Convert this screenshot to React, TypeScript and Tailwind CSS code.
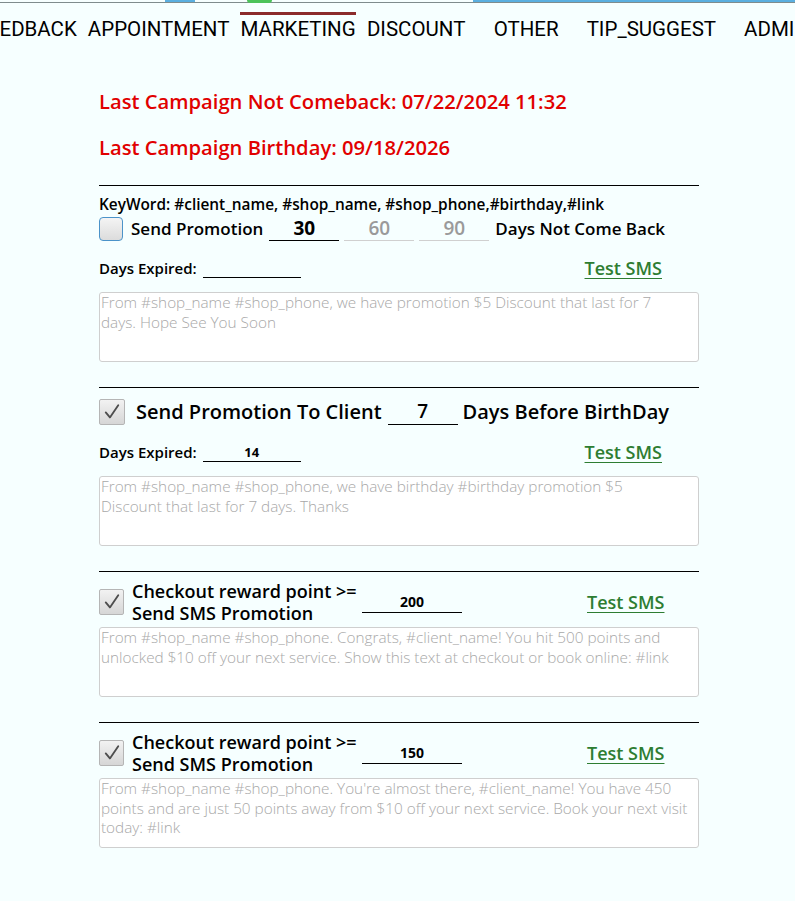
import React from 'react';

const tabs = ['FEEDBACK', 'APPOINTMENT', 'MARKETING', 'DISCOUNT', 'OTHER', 'TIP_SUGGEST', 'ADMIN'];

const CheckBox = ({ checked, small }: { checked?: boolean; small?: boolean }) => {
  if (!checked) {
    return (
      <span className="block w-[24px] h-[24px] shrink-0 rounded-[4px] border-[1.5px] border-[#4b93c9] bg-gradient-to-b from-[#f4f4f4] to-[#dcdcdc]" />
    );
  }
  return (
    <span
      className={
        'flex items-center justify-center shrink-0 rounded-[2px] border border-[#b5b5b5] bg-gradient-to-b from-[#f2f2f2] to-[#d6d6d6] ' +
        (small ? 'w-[25px] h-[26px]' : 'w-[26px] h-[26px]')
      }
    >
      <svg viewBox="0 0 24 24" className="w-[20px] h-[20px]" fill="none">
        <path d="M4.5 12.5 L9.5 18.5 L19.5 4" stroke="#4d4d4d" strokeWidth="2.2" strokeLinecap="round" strokeLinejoin="round" />
      </svg>
    </span>
  );
};

const Underline = ({ value, width, muted, bold, size }: { value?: string; width: string; muted?: boolean; bold?: boolean; size?: string }) => (
  <div
    className={
      'flex items-center justify-center shrink-0 border-b ' +
      width +
      ' ' +
      (muted ? 'border-[#d0d0d0] text-[#9a9a9a]' : 'border-black text-black') +
      ' ' +
      (bold ? 'font-bold' : 'font-semibold') +
      ' ' +
      (size || 'text-[19px]')
    }
  >
    {value}
  </div>
);

const TestSms = ({ className }: { className?: string }) => (
  <span className={'text-[18px] leading-[22px] font-semibold text-[#2e7d32] underline underline-offset-[3px] decoration-[1px] ' + (className || '')}>
    Test SMS
  </span>
);

const Message = ({ text }: { text: string }) => (
  <textarea
    readOnly
    placeholder={text}
    className="block w-full h-[70px] resize-none rounded-[3px] border border-[#cfcfcf] bg-white px-[1px] pt-0 text-[15.3px] leading-[19.5px] font-light placeholder:text-[#a8a8a8] outline-none overflow-hidden"
  />
);

const DaysExpired = ({ value }: { value?: string }) => (
  <div className="flex items-center justify-between h-[20px] mt-[17px] pr-[37px]">
    <div className="flex items-center gap-[6px]">
      <span className="text-[15px] leading-[20px] font-semibold">Days Expired:</span>
      <Underline value={value} width="w-[98px] h-[18px] mt-[2px]" bold size="text-[13px]" />
    </div>
    <TestSms />
  </div>
);

const RewardBlock = ({ points, text }: { points: string; text: string }) => (
  <div className="border-t border-black pt-[8px]">
    <div className="flex items-center h-[44px]">
      <CheckBox checked small />
      <div className="ml-[8px] w-[230px] text-[18px] font-semibold leading-[22px]">
        <div>Checkout reward point &gt;=</div>
        <div>Send SMS Promotion</div>
      </div>
      <Underline value={points} width="w-[100px] h-[22px]" bold size="text-[14px]" />
      <TestSms className="ml-[125px]" />
    </div>
    <div className="mt-[3px]">
      <Message text={text} />
    </div>
  </div>
);

export default function App() {
  return (
    <div className="min-h-[901px] bg-[#f6ffff] text-black font-['Open_Sans',sans-serif]">
      <div className="relative h-[3px] border-b border-[#7f8c8d]">
        <div className="absolute left-[165px] top-0 h-[2px] w-[30px] bg-[#5aafe0]" />
        <div className="absolute left-[247px] top-0 h-[3px] w-[25px] rounded-b-full bg-[#4cc35a]" />
        <div className="absolute left-[473px] top-0 h-[2px] right-0 bg-[#5aafe0]" />
      </div>
      <div className="flex overflow-hidden h-[47px] pt-[9px]">
        <div className="flex shrink-0 -ml-[29px] items-start">
          {tabs.map((t) => (
            <div key={t} className="min-w-[110px] px-[5.5px] flex justify-center shrink-0">
              <span
                className={
                  "font-['Roboto',sans-serif] text-[20.5px] leading-[22px] pt-[3px] border-t-[3px] " +
                  (t === 'MARKETING' ? 'border-[#8b2b2b]' : 'border-transparent')
                }
              >
                {t}
              </span>
            </div>
          ))}
        </div>
      </div>

      <div className="ml-[99px] w-[600px] pt-[38px]">
        <div className="text-[20.2px] font-semibold text-[#e10000] leading-[26px]">
          Last Campaign Not Comeback: 07/22/2024 11:32
        </div>
        <div className="text-[20.2px] font-semibold text-[#e10000] leading-[26px] mt-[20px]">
          Last Campaign Birthday: 09/18/2026
        </div>

        <div className="border-t border-black mt-[25px] pt-[9px]">
          <div className="text-[15.4px] font-semibold leading-[19px]">
            KeyWord: #client_name, #shop_name, #shop_phone,#birthday,#link
          </div>
          <div className="flex items-center h-[24px] mt-[3px]">
            <CheckBox />
            <span className="ml-[8px] text-[17px] font-semibold">Send Promotion</span>
            <div className="flex gap-[5px] ml-[6px]">
              <Underline value="30" width="w-[70px] h-[24px]" bold />
              <Underline value="60" width="w-[70px] h-[24px]" muted />
              <Underline value="90" width="w-[70px] h-[24px]" muted />
            </div>
            <span className="ml-[6px] text-[17px] font-semibold">Days Not Come Back</span>
          </div>
          <DaysExpired />
          <div className="mt-[14px]">
            <Message text={'From #shop_name #shop_phone, we have promotion $5 Discount that last for 7\ndays. Hope See You Soon'} />
          </div>
        </div>

        <div className="border-t border-black mt-[25px] pt-[11px]">
          <div className="flex items-center h-[26px]">
            <CheckBox checked />
            <span className="ml-[11px] text-[20px] font-semibold">Send Promotion To Client</span>
            <Underline value="7" width="w-[70px] h-[26px] ml-[6px]" />
            <span className="ml-[5px] text-[20px] font-semibold">Days Before BirthDay</span>
          </div>
          <DaysExpired value="14" />
          <div className="mt-[14px]">
            <Message text={'From #shop_name #shop_phone, we have birthday #birthday promotion $5\nDiscount that last for 7 days. Thanks'} />
          </div>
        </div>

        <div className="mt-[25px]">
          <RewardBlock
            points="200"
            text={'From #shop_name #shop_phone. Congrats, #client_name! You hit 500 points and\nunlocked $10 off your next service. Show this text at checkout or book online: #link'}
          />
        </div>
        <div className="mt-[25px]">
          <RewardBlock
            points="150"
            text={"From #shop_name #shop_phone. You're almost there, #client_name! You have 450\npoints and are just 50 points away from $10 off your next service. Book your next visit\ntoday: #link"}
          />
        </div>
      </div>
    </div>
  );
}
